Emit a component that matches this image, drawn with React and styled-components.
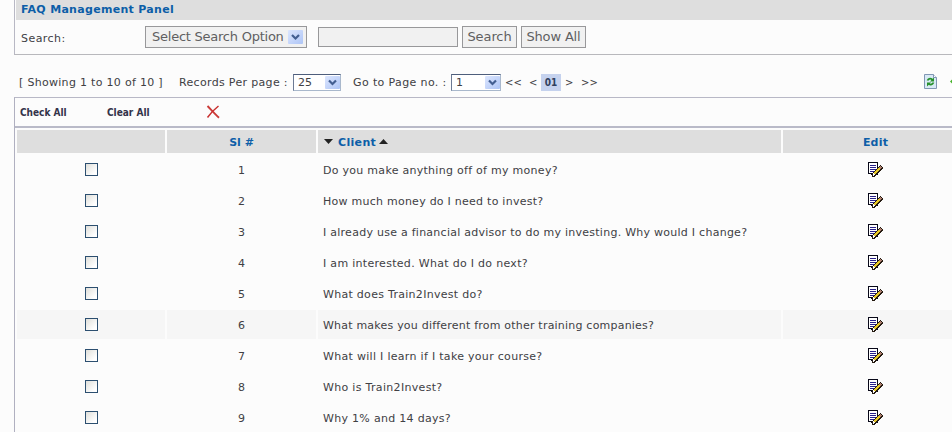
import React from 'react';
import styled, { createGlobalStyle } from 'styled-components';

const Global = createGlobalStyle`
  *, *::before, *::after { box-sizing: border-box; }
  body {
    margin: 0;
    overflow: hidden;
    background: #fcfcfc;
    color: #404044;
    font: 11px/14px "DejaVu Sans", Verdana, sans-serif;
  }
`;

const Page = styled.main`
  width: 952px;
  height: 432px;
  padding-left: 14px;
  overflow: hidden;
`;

const Label = styled.span`
  white-space: pre;
  letter-spacing: ${(p) => p.$track ?? 0.33}px;
`;

const SearchPanel = styled.section`
  height: 55px;
  border-left: 1px solid #b8b8c4;
  border-bottom: 1px solid #b8b8bc;
`;

const PanelTitle = styled.h1`
  margin: 0 0 0 1px;
  padding: 3px 0 0 5px;
  height: 20px;
  background: #dedede;
  color: #0d5ea8;
  font-size: 11px;
  font-weight: bold;
`;

const SearchForm = styled.form`
  display: flex;
  align-items: center;
  height: 34px;
  padding-left: 6px;
`;

const SearchCaption = styled.div`
  width: 124px;
  padding-top: 3px;
`;

const SearchSelect = styled.div`
  display: flex;
  align-items: center;
  justify-content: space-between;
  width: 162px;
  height: 22px;
  padding: 0 3px 0 6px;
  margin-right: 11px;
  border: 1px solid #98989a;
  background: #f1f1f1;
  color: #5f5f61;
  font-size: 13px;
`;

const SearchInput = styled.input`
  width: 140px;
  height: 20px;
  margin-right: 4px;
  padding: 0 4px;
  border: 1px solid #98989a;
  border-radius: 0;
  background: #f1f1f1;
`;

const FormButton = styled.button`
  width: ${(p) => p.$width}px;
  height: 22px;
  margin-right: 4px;
  padding: 0;
  border: 1px solid #98989a;
  background: #f1f1f1;
  color: #5f5f61;
  font: 13px/18px "DejaVu Sans", Verdana, sans-serif;
`;

const Pager = styled.div`
  display: flex;
  align-items: center;
  height: 42px;
  padding: 12px 0 0 5px;
`;

const PagerGroup = styled.div`
  display: flex;
  align-items: center;
  width: ${(p) => p.$width}px;
`;

const PagerCaption = styled.div`
  width: ${(p) => p.$width}px;
  padding-top: 2px;
`;

const SmallSelect = styled.div`
  display: flex;
  align-items: center;
  justify-content: space-between;
  width: ${(p) => p.$width}px;
  height: 17px;
  padding-left: 4px;
  border: 1px solid #a9b8cc;
  border-top-color: #4e5e7c;
  border-left-color: #6c7a94;
  background: #fff;
`;

const SelectValue = styled.span`
  padding-top: 2px;
`;

const PageStep = styled.a`
  width: ${(p) => p.$width}px;
  padding-top: 2px;
  font-size: 10px;
`;

const CurrentPage = styled.span`
  width: 20px;
  height: 17px;
  margin-right: 4px;
  background: #c5d2ee;
  color: #30405e;
  font: bold 10px/18px "DejaVu Sans Condensed", "DejaVu Sans", sans-serif;
  text-align: center;
`;

const PagerTools = styled.div`
  display: flex;
  flex: none;
  align-items: center;
  gap: 13px;
  margin-left: auto;
  padding-bottom: 1px;
`;

const ListPanel = styled.section`
  height: 335px;
  border-top: 1px solid #b8b8c6;
  border-left: 1px solid #b0b0c0;
`;

const Toolbar = styled.div`
  display: flex;
  align-items: center;
  height: 30px;
  padding-left: 5px;
  border-bottom: 2px solid #b9bac8;
  color: #33334a;
  font: bold 10px/14px "DejaVu Sans Condensed", "DejaVu Sans", sans-serif;
`;

const ToolLink = styled.a`
  width: ${(p) => p.$width}px;
  padding-top: 2px;
`;

const Table = styled.div`
  display: grid;
  gap: 2px;
  padding: 2px 0 0 2px;
`;

const Row = styled.div`
  display: grid;
  grid-template-columns: 148px 149px 463px 185px;
  column-gap: 2px;
`;

const Cell = styled.div`
  display: flex;
  align-items: center;
  justify-content: ${(p) => (p.$left ? 'flex-start' : 'center')};
  height: 29px;
  padding-left: ${(p) => (p.$left ? 5 : 0)}px;
  background: ${(p) => (p.$hover ? '#f6f6f6' : 'transparent')};

  ${Label} {
    padding-top: 3px;
  }
`;

const HeadCell = styled(Cell)`
  height: 23px;
  background: #dedede;
  color: #0d5ea8;
  font-weight: bold;
`;

const CheckBox = styled.span`
  width: 13px;
  height: 13px;
  border: 1px solid #2c4f70;
  background: linear-gradient(135deg, #dfdfda, #fff 80%);
`;

const Triangle = styled.svg`
  flex: none;
  width: 9px;
  height: 5px;
  margin: 0 ${(p) => (p.$before ? 5 : 0)}px 0 ${(p) => (p.$before ? 1 : 3)}px;
  fill: #222;
`;

const Glyph = styled.svg`
  flex: none;
  display: block;
`;

const Arrow = ({ height }) => (
  <Glyph width="15" height={height} viewBox={`0 0 15 ${height}`}>
    <defs>
      <linearGradient id="arrowFill" x2="1" y2="1">
        <stop stopColor="#dce6fe" />
        <stop offset="1" stopColor="#aec5f6" />
      </linearGradient>
    </defs>
    <rect width="15" height={height} rx="1" fill="url(#arrowFill)" />
    <path d={`M4 ${height / 2 - 2}l3.5 3.5l3.5-3.5`} fill="none" stroke="#435f91" strokeWidth="2.2" />
  </Glyph>
);

const EditIcon = () => (
  <Glyph width="15" height="15" viewBox="0 0 15 15" shapeRendering="crispEdges">
    <path d="M.5.5h9v12h-6v-1h-3z" fill="#fff" stroke="#080818" />
    <path d="M2 3.5h6M2 5.5h6M2 7.5h6M2 9.5h4" stroke="#28208a" fill="none" />
    <path d="M4 15v-4L12 3l3 3-9 9z" fill="#241a10" />
    <path d="M6 12L12 6" stroke="#e8c928" strokeWidth="2.2" />
    <path d="M12 4h1v1h1v1h-1v1h-1V6h-1V5h1z" fill="#b08070" />
    <path d="M5 11h1v1h1v1H6v1H5z" fill="#fff" />
  </Glyph>
);

const DeleteIcon = () => (
  <Glyph width="14" height="14" viewBox="0 0 14 14">
    <path d="M1.500 1C4.500 4 9 9 13 12.700" stroke="#cb3b38" strokeWidth="1.9" fill="none" />
    <path d="M12.500 1C8 4.500 4 9 1.500 12.500" stroke="#c9302f" strokeWidth="1.5" fill="none" />
  </Glyph>
);

const RefreshIcon = () => (
  <Glyph width="13" height="15" viewBox="0 0 13 15">
    <path d="M.5.5h9l3 3v11H.5z" fill="#d8e9f5" stroke="#8196b4" />
    <path d="M9.500.5v3h3" fill="#fff" stroke="#8196b4" />
    <path d="M3.500 6.500C4.500 4 7.500 4 8.500 6M9.500 8.500C8.500 11 5.500 11 4.500 9.500" stroke="#26902a" strokeWidth="1.8" fill="none" />
    <path d="M6 7.500h4v-4zM7 8.500H3v4z" fill="#26902a" />
  </Glyph>
);

const BackIcon = () => (
  <Glyph width="2" height="5" viewBox="0 0 2 5">
    <path d="M0 2.500L2 .5v4z" fill="#48b32c" />
  </Glyph>
);

const questions = [
  ['Do you make anything off of my money?', 0.28],
  ['How much money do I need to invest?', 0.25],
  ['I already use a financial advisor to do my investing. Why would I change?', 0.26],
  ['I am interested. What do I do next?', 0.3],
  ['What does Train2Invest do?', 0.29],
  ['What makes you different from other training companies?', 0.21],
  ['What will I learn if I take your course?', 0.3],
  ['Who is Train2Invest?', 0.32],
  ['Why 1% and 14 days?', 0.3],
];

export default function App() {
  return (
    <Page>
      <Global />
      <SearchPanel>
        <PanelTitle><Label $track={0.3}>FAQ Management Panel</Label></PanelTitle>
        <SearchForm>
          <SearchCaption><Label $track={0.45}>Search:</Label></SearchCaption>
          <SearchSelect>
            <Label $track={-0.24}>Select Search Option</Label>
            <Arrow height={14} />
          </SearchSelect>
          <SearchInput aria-label="Search text" />
          <FormButton type="button" $width={55}><Label $track={-0.1}>Search</Label></FormButton>
          <FormButton type="button" $width={65}><Label $track={-0.15}>Show All</Label></FormButton>
        </SearchForm>
      </SearchPanel>
      <Pager>
        <PagerGroup $width={160}>
          <PagerCaption $width={160}><Label $track={0.3}>[ Showing 1 to 10 of 10 ]</Label></PagerCaption>
        </PagerGroup>
        <PagerGroup $width={174}>
          <PagerCaption $width={114}><Label $track={0.33}>Records Per page :</Label></PagerCaption>
          <SmallSelect $width={48}><SelectValue>25</SelectValue><Arrow height={13} /></SmallSelect>
        </PagerGroup>
        <PagerGroup $width={152}>
          <PagerCaption $width={98}><Label $track={0.38}>Go to Page no. :</Label></PagerCaption>
          <SmallSelect $width={50}><SelectValue>1</SelectValue><Arrow height={13} /></SmallSelect>
        </PagerGroup>
        <PageStep $width={24}>&lt;&lt;</PageStep>
        <PageStep $width={12}>&lt;</PageStep>
        <CurrentPage>01</CurrentPage>
        <PageStep $width={16}>&gt;</PageStep>
        <PageStep $width={20}>&gt;&gt;</PageStep>
        <PagerTools><RefreshIcon /><BackIcon /></PagerTools>
      </Pager>
      <ListPanel>
        <Toolbar>
          <ToolLink $width={87}>Check All</ToolLink>
          <ToolLink $width={99}>Clear All</ToolLink>
          <DeleteIcon />
        </Toolbar>
        <Table>
          <Row>
            <HeadCell />
            <HeadCell><Label $track={0}>Sl #</Label></HeadCell>
            <HeadCell $left>
              <Triangle $before viewBox="0 0 9 5"><path d="M0 0h9L4.500 5z" /></Triangle>
              <Label>Client</Label>
              <Triangle viewBox="0 0 9 5"><path d="M0 5h9L4.500 0z" /></Triangle>
            </HeadCell>
            <HeadCell><Label $track={0.2}>Edit</Label></HeadCell>
          </Row>
          {questions.map(([text, track], i) => (
            <Row key={text}>
              <Cell $hover={i === 5}><CheckBox /></Cell>
              <Cell $hover={i === 5}><Label $track={0}>{i + 1}</Label></Cell>
              <Cell $hover={i === 5} $left><Label $track={track}>{text}</Label></Cell>
              <Cell $hover={i === 5}><EditIcon /></Cell>
            </Row>
          ))}
        </Table>
      </ListPanel>
    </Page>
  );
}
